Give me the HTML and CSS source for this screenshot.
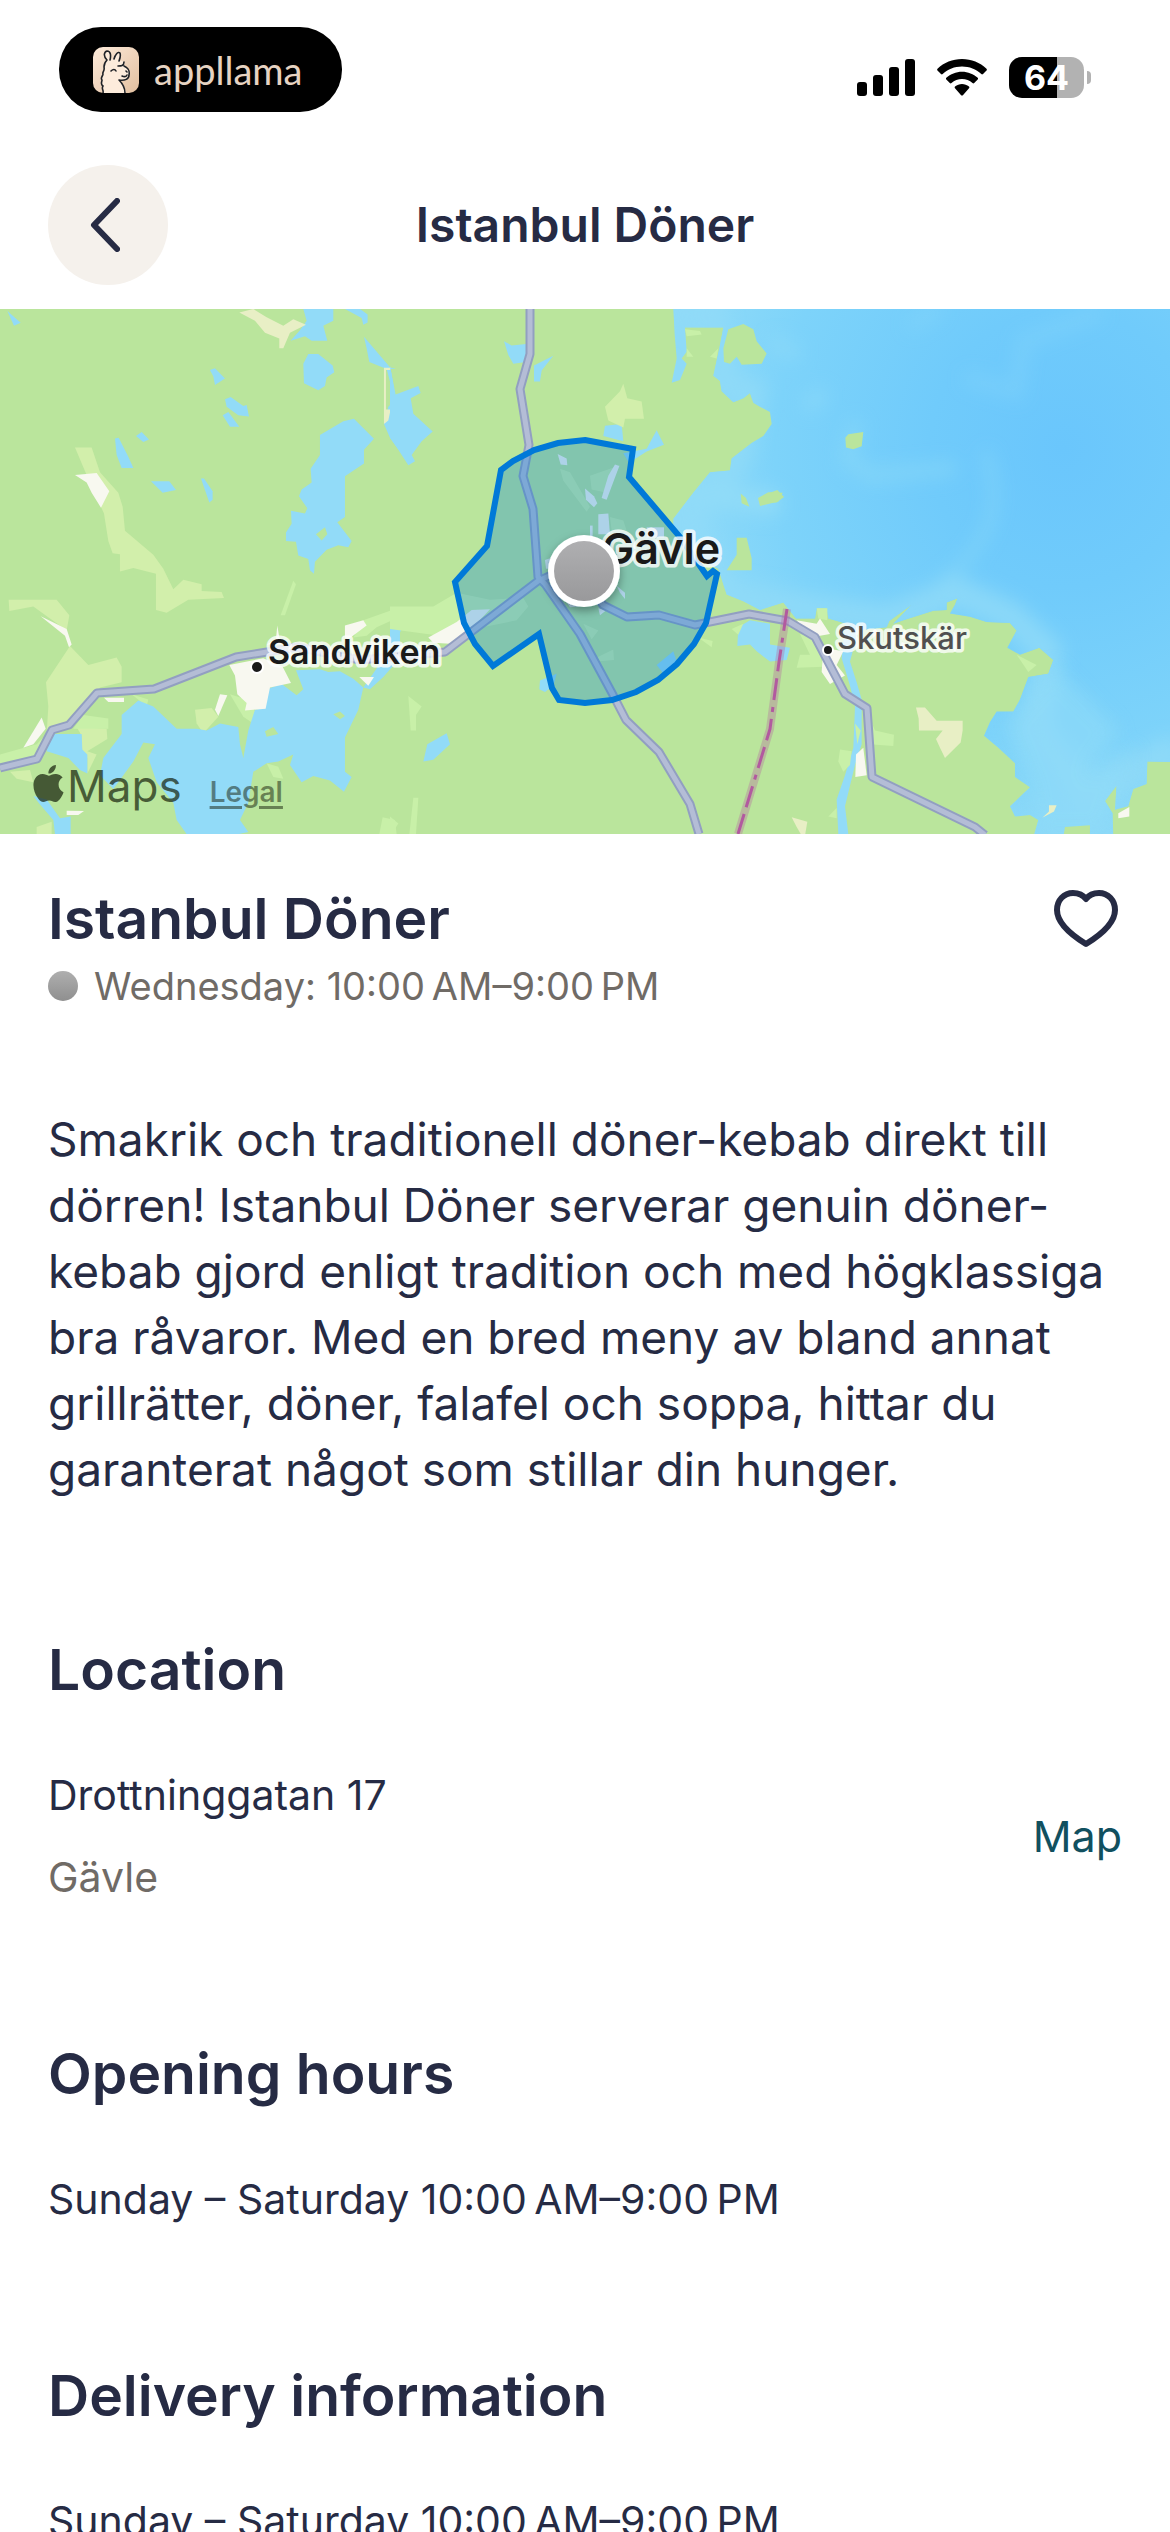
FILE: index.html
```html
<!DOCTYPE html>
<html lang="en">
<head>
    <meta charset="UTF-8">
    <meta name="viewport" content="width=device-width, initial-scale=1">
    <title>Istanbul Döner</title>
    <link rel="stylesheet" href="styles.css">
</head>
<body>
<!-- status bar -->
<div class="status-bar">
    <div class="app-pill">
        <svg class="app-icon" viewBox="0 0 46 46" aria-hidden="true">
            <defs>
                <linearGradient id="iconBg" x1="0" y1="0" x2="1" y2="1">
                    <stop offset="0" stop-color="#fdebdb"/>
                    <stop offset="1" stop-color="#e2bf9f"/>
                </linearGradient>
            </defs>
            <rect width="46" height="46" rx="10" fill="url(#iconBg)"/>
            <path d="M10 46C11 43 8 42 10 39C7 37 9 35 9 33C7 31 10 29 10 27C9 25 12 24 11 20C11 17 12 15 14 13C10 9 11 5 14 4C18 4 18 9 17 13L21 12C22 8 25 4 27 6C28 9 27 11 26 14C30 13 33 16 31 19C33 20 37 23 36 28C36 32 32 34 27 33C30 37 33 41 33 46Z" fill="#fdecdc"/>
            <path d="M10 46C11 43 8 42 10 39C7 37 9 35 9 33C7 31 10 29 10 27C9 25 12 24 11 20C11 17 12 15 14 13C10 9 11 5 14 4C18 4 18 9 17 13M21 12C22 8 25 4 27 6C28 9 27 11 26 14M25 19C28 19 31 19 31 15M31 19C35 21 37 23 36 28C36 32 32 34 26 33C30 37 32 41 32 46M18 24C20 22 22 22 23 24M33 24L34 25M29 29C31 30 33 30 34 28" fill="none" stroke="#1f2227" stroke-width="1.6" stroke-linecap="round" stroke-linejoin="round"/>
        </svg>
        <span class="app-name">appllama</span>
    </div>
    <div class="status-icons">
        <svg class="signal" viewBox="0 0 58 37" aria-hidden="true">
            <rect x="0" y="23" width="10" height="14" rx="3"/>
            <rect x="16" y="16" width="10" height="21" rx="3"/>
            <rect x="32" y="8" width="10" height="29" rx="3"/>
            <rect x="48" y="0" width="10" height="37" rx="3"/>
        </svg>
        <svg class="wifi" viewBox="0 0 50 37" aria-hidden="true">
            <path d="M25 0C34.500 0 43 3.500 49.500 9.700C50 10.200 50 11 49.500 11.500L46 15C45.500 15.500 44.800 15.500 44.300 15C39 10.200 32.500 7.500 25 7.500C17.500 7.500 11 10.200 5.700 15C5.200 15.500 4.500 15.500 4 15L.5 11.500C0 11 0 10.200.5 9.700C7 3.500 15.500 0 25 0Z"/>
            <path d="M25 12.700C31 12.700 36.500 15 40.700 18.800C41.200 19.300 41.200 20 40.700 20.500L37.200 24C36.700 24.500 36 24.500 35.500 24C32.600 21.500 29 20 25 20C21 20 17.400 21.500 14.500 24C14 24.500 13.300 24.500 12.800 24L9.300 20.500C8.800 20 8.800 19.300 9.300 18.800C13.500 15 19 12.700 25 12.700Z"/>
            <path d="M25 25C27.500 25 30 26 32 27.600C32.500 28.100 32.500 28.800 32 29.300L25.900 36.200C25.400 36.700 24.600 36.700 24.100 36.200L18 29.300C17.500 28.800 17.500 28.100 18 27.600C20 26 22.500 25 25 25Z"/>
        </svg>
        <div class="battery">
            <div class="battery-body">64</div>
            <div class="battery-cap"></div>
        </div>
    </div>
</div>

<!-- header -->
<header class="top-bar">
    <button type="button" class="back-btn" aria-label="Back">
        <svg viewBox="0 0 30 54" aria-hidden="true">
            <path d="M27 3L4 27L27 51" fill="none" stroke="#262b44" stroke-width="6" stroke-linecap="round" stroke-linejoin="round"/>
        </svg>
    </button>
    <div class="top-title">Istanbul Döner</div>
</header>

<!-- map -->
<div class="map" id="map">
    <svg class="map-canvas" viewBox="0 0 1170 525" role="img" aria-label="Map of Gävle">
        <defs>
            <radialGradient id="sea" gradientUnits="userSpaceOnUse" cx="880" cy="430" r="1150">
                <stop offset="0" stop-color="#6ac6fc"/>
                <stop offset=".35" stop-color="#70cbfb"/>
                <stop offset=".75" stop-color="#7dd3fa"/>
                <stop offset="1" stop-color="#8edaf8"/>
            </radialGradient>
            <linearGradient id="pin" x1="0" y1="0" x2="0" y2="1">
                <stop offset="0" stop-color="#afafb1"/>
                <stop offset="1" stop-color="#99999b"/>
            </linearGradient>
            <filter id="soft" x="-50%" y="-50%" width="200%" height="200%"><feGaussianBlur stdDeviation="26"/></filter>
            <filter id="shadow" x="-50%" y="-50%" width="200%" height="200%"><feDropShadow dx="0" dy="4" stdDeviation="5" flood-opacity=".35"/></filter>
            <path id="coast" d="M-290 20L-286 100L-280 170L-295 240L-270 232L-250 185L-265 170L-250 150L-255 80L-140 80L-152 140L-170 220L-150 235L-145 265L-110 297L-80 285L-60 270L-50 298L-30 310L0 325L5 360L-20 395L-55 415L-115 460L-120 495L-180 500L-230 560L-290 635L-290 660L-250 740L-155 780L-140 825L-130 855L-80 875L-30 900L40 878L78 925L135 925L140 895L170 895L175 925L230 940L260 960L350 950L358 932L425 885L370 940L400 930L490 902L530 900L530 878L563 866L555 885L540 910L600 920L650 935L720 938L740 960L712 1010L750 1030L808 1010L850 1045L835 1085L775 1095L750 1160L730 1195L680 1195L660 1225L642 1265L685 1300L735 1345L735 1385L780 1415L720 1470L735 1500L780 1495L805 1510L790 1560L1030 1560L1028 1490L1005 1455L1040 1410L1035 1480L1075 1470L1090 1420L1130 1405L1132 1340L1210 1342V20Z"/>
            <clipPath id="seaClip"><use href="#coast"/></clipPath>
            <path id="roadNorth" d="M530 0V45L520 80L529 136L523 167L533 200L538 268L545 275L580 325L612 384L626 411L659 443L690 495L699 525"/>
            <path id="roadWest" d="M0 459L37 450L52 421L69 416L97 384L154 380L236 348L267 343L297 338L360 351L445 343L538 272L560 262"/>
            <path id="roadEast" d="M584 270L603 296L627 308L659 306L695 316L749 305L788 312L815 328L845 385L867 399L872 468L975 518L985 526"/>
            <path id="railway" d="M787 300L779 353L770 420L756 466L738 525"/>
        </defs>
        <rect width="1170" height="525" fill="#bae59c"/>

        <!-- sea -->
        <g transform="translate(770 -9) scale(.3333 .3444)">
            <use href="#coast" fill="url(#sea)"/>
            <g clip-path="url(#seaClip)">
                <g filter="url(#soft)" fill="none" stroke="#90dbf8" stroke-linecap="round">
                    <path d="M-290 30L-180 40L-140 240L-60 270L-100 460L-250 640L-130 860L60 890L350 930L560 850L720 920L830 1020L800 1250L950 1450L1190 1320" stroke-width="90" opacity=".8"/>
                    <path d="M-250 560L0 590" stroke-width="70"/>
                    <path d="M650 450Q700 600 630 700T510 820" stroke-width="26" opacity=".5"/>
                    <path d="M255 370L230 460L300 510L540 490" stroke-width="40" opacity=".5"/>
                    <path d="M430 70L500 30M600 230L740 270L760 120L980 40" stroke-width="40" opacity=".3"/>
                    <path d="M70 150L20 130M120 300L150 280" stroke-width="45" opacity=".6"/>
                </g>
                <path d="M950 1380L1100 1300L1000 1550H800L780 1420L700 1230L850 1060L1050 1250Z" fill="#90dbf8" opacity=".6" filter="url(#soft)"/>
            </g>
            <g fill="#bae59c">
                <path d="M226 400L235 390L280 383L275 425L250 433L228 428Z"/>
                <path d="M0 560L22 552L42 572L20 588H0Z"/>
                <path d="M-36 575L-5 558L38 560L25 585L-30 598Z"/>
                <path d="M-88 562L-72 575L-62 600L-85 590Z"/>
                <path d="M-100 690L-70 690L-55 750L-55 785L-130 785L-100 740Z"/>
                <path d="M-140 140L-125 85L-80 70L-50 85L-40 120L-10 155L-25 185L-85 188L-100 165L-120 185L-138 180Z"/>
                <path d="M885 1530L960 1525V1560H880Z"/>
            </g>
            <!-- river and bay near Skutskär -->
            <g fill="#92dbf8">
                <path d="M-95 950L-60 930L0 940V1000L60 1010L50 1045L0 1050L-40 1020L-60 1000L-98 1005Z"/>
                <path d="M225 940L265 960L240 1050L260 1110L275 1160L275 1290L255 1350L225 1470L235 1551H205L200 1450L225 1380L250 1300L255 1180L240 1120L215 1040Z"/>
            </g>
            <g fill="#c8f0a8">
                <path d="M140 895L172 895L172 930L145 925Z"/>
                <path d="M90 970L120 975L150 1030L160 1065L80 1068L90 1030L120 1030Z"/>
                <path d="M740 1030L800 1060L775 1080Z"/>
                <path d="M300 1215L315 1250L372 1262L370 1295L300 1290Z"/>
                <path d="M210 1305L245 1310L240 1350L220 1370L205 1340Z"/>
                <path d="M255 1230L272 1250L262 1290Z"/>
                <path d="M175 1500L200 1475V1505Z"/>
                <path d="M-255 85L-210 90L-205 100L-250 105ZM-250 140L-230 165H-250ZM-155 140L-180 165L-160 170Z"/>
            </g>
            <g fill="#f8f8f0">
                <path d="M80 930L140 940L150 925L180 970L120 980Z"/>
                <path d="M160 1010L220 1020L200 1060L225 1090L180 1115L155 1080Z"/>
                <path d="M258 1320L280 1300L290 1380L256 1385Z"/>
                <path d="M1045 1490L1078 1472V1500L1045 1505Z"/>
            </g>
            <g fill="#e8efc5">
                <path d="M438 1183H465L500 1222H578V1250L572 1285L525 1330L510 1300L498 1275L518 1250H447L446 1215Z"/>
                <path d="M65 1502L112 1515L105 1555H95L80 1530Z"/>
                <path d="M817 1503L837 1485V1467H860L852 1485Z"/>
            </g>
        </g>

        <!-- west part -->
        <g transform="translate(0 -9) scale(.3333 .3444)">
            <g fill="#d2efab">
                <path d="M225 428H275L300 500L355 560L368 600L375 670L460 740L490 780L520 840L550 812L605 825L605 845L665 848L672 865L565 870L500 908L468 900V795L400 778L360 788V738L338 735L325 700L312 620L265 520Z"/>
                <path d="M26 870L170 870L208 915L200 960L150 925L100 890L28 903Z"/>
                <path d="M210 1005L265 1060L350 1038L365 1065L365 1110L300 1125L285 1150L210 1230L140 1260L145 1180L138 1110Z"/>
                <path d="M585 1190L635 1185L655 1210L610 1258L590 1230Z"/>
                <path d="M230 1240L320 1245L322 1275L262 1310L290 1320L262 1375V1330L245 1310V1265Z"/>
                <path d="M110 1530L155 1515V1560H110Z"/>
                <path d="M30 1370L90 1365L100 1400L50 1390Z"/>
                <path d="M795 1260L820 1240L835 1265L800 1270Z"/>
            </g>
            <g fill="#c8f0a8">
                <path d="M1060 980L1090 930L1200 892V920L1130 950L1100 975Z"/>
                <path d="M880 815L888 825L855 915L842 915Z"/>
                <path d="M690 1145L740 1160L770 1200L760 1230L730 1210Z"/>
                <path d="M0 1320L110 1290L140 1260L110 1330L0 1350Z"/>
                <path d="M250 1205L325 1215V1245H220Z"/>
                <path d="M800 1345L835 1355L850 1390L820 1385Z"/>
                <path d="M1138 1551L1148 1502L1185 1510L1190 1551Z"/>
                <path d="M395 1145L445 1160L440 1180Z"/>
            </g>
            <g fill="#92dbf8">
                <path d="M22 32L62 66L42 75Z"/>
                <path d="M910 26H1000V60L970 75L982 118H935L915 105L872 118L900 88L920 60Z"/>
                <path d="M1035 26H1080L1103 42V65L1090 72L1085 52Z"/>
                <path d="M1092 107L1170 195L1187 200H1172L1188 280L1200 278V440L1170 400L1152 360L1165 310L1185 290L1160 200L1108 180L1100 140Z"/>
                <path d="M925 157H955L998 190L1003 210L980 225L975 250L955 262L912 242L910 185Z"/>
                <path d="M630 203L645 198L675 228L645 247L640 222Z"/>
                <path d="M675 288L692 282L730 308L740 305L747 338L715 335L680 310Z"/>
                <path d="M668 335L685 325L718 368H690Z"/>
                <path d="M345 402L356 400L385 455L400 488H365L350 450Z"/>
                <path d="M408 395L425 383L447 405L430 412Z"/>
                <path d="M453 526H508L528 552L488 560Z"/>
                <path d="M603 518H612L638 555V580L628 588Z"/>
                <path d="M960 392L1030 352L1062 345L1122 403L1092 435V475L1035 512V630L1012 645L1055 700L1045 718L1015 712L980 725L945 760L942 795L930 785L925 752L895 742L888 702L858 700V675L875 650L873 612L915 620L922 605L897 570L905 550L935 530L932 490L960 450Z"/>
                <path d="M365 1205L415 1163L460 1180L530 1245H590L620 1250L660 1230L715 1240L720 1290L730 1330L745 1250L765 1190L795 1185L800 1130L845 1115L890 1148L910 1130L888 1075L960 1072L985 1080L1020 1078L1060 1100L1090 1125L1075 1190L1035 1270V1370L1055 1385L1032 1428L990 1395L940 1382L905 1400L870 1350L880 1320L835 1340L800 1345L760 1370L745 1460L720 1510L745 1545L715 1551H560L530 1510L520 1460L470 1400L445 1330L465 1290L430 1285L400 1340L340 1420L330 1410L300 1380L310 1330L365 1260Z"/>
                <path d="M150 1260H245L247 1305L262 1320V1375L240 1365L205 1330L140 1310Z"/>
                <path d="M100 1440L140 1450L180 1505L212 1500V1551H165L160 1510L120 1465Z"/>
                <path d="M1090 1125L1130 1070L1180 960L1200 952V1040L1150 1095L1110 1130Z"/>
            </g>
            <g fill="#bae59c">
                <path d="M948 680L975 660L982 680L965 698Z"/>
                <path d="M795 1252L820 1240L835 1260L800 1268Z"/>
                <path d="M1000 1203L1020 1195L1035 1208L1020 1217Z"/>
            </g>
            <g fill="#f8f8f0">
                <path d="M225 508L290 502L328 555L303 603L275 560L260 530Z"/>
                <path d="M122 918L200 955L215 1000L207 1008L195 975Z"/>
                <path d="M312 1155H372V1167H325Z"/>
                <path d="M125 1212L137 1245L100 1290L70 1300Z"/>
                <path d="M688 1060L790 1040L848 1065L873 1112L810 1125L797 1187L735 1192L740 1170L712 1145L705 1090Z"/>
                <path d="M660 1145L682 1148L655 1208L645 1190Z"/>
                <path d="M828 985L832 945L838 980L850 1000H800Z"/>
                <path d="M1035 945L1090 930L1100 945L1045 985L1035 980Z"/>
                <path d="M1078 1095H1122L1105 1120Z"/>
                <path d="M200 1483L252 1484L235 1495H200Z"/>
            </g>
            <g fill="#e8efc5">
                <path d="M718 36L760 26L800 50L850 75L880 56L918 72L870 95L850 140H838V112L795 95L765 60Z"/>
                <path d="M1152 197H1172V203H1158V318H1172L1165 350L1152 360Z"/>
            </g>
        </g>

        <!-- middle part -->
        <g transform="translate(390 -9) scale(.3333 .3444)">
            <g fill="#92dbf8">
                <path d="M0 190L15 275L85 250L92 270L62 285L70 330L128 382L95 410L65 450L75 468L55 480L25 435L0 400Z"/>
                <path d="M342 120L365 132L408 128V180L370 185L355 160Z"/>
                <path d="M432 190L490 162L455 205L450 237H432Z"/>
                <path d="M645 365L695 360L700 410L640 395Z"/>
                <path d="M700 445L770 432L800 378L822 420L770 440L735 462L715 470Z"/>
                <path d="M450 1105L500 1085L490 1120L465 1138L448 1130Z"/>
                <path d="M100 1340L112 1290L170 1258L180 1290L130 1335Z"/>
                <path d="M800 1060L850 1020L860 1050L825 1090Z"/>
                <path d="M0 955L35 955L20 985H0Z"/>
            </g>
            <g fill="#d2efab">
                <path d="M645 310L690 265L700 243L712 285L755 295L762 345L705 345L700 370L655 350Z"/>
            </g>
            <g fill="#c8f0a8">
                <path d="M510 490L540 500L600 600L590 615L520 525Z"/>
                <path d="M600 510L660 490L690 480L650 560L605 550Z"/>
                <path d="M0 890L130 890L200 850L300 870L400 865L415 890L380 930L150 975L0 955Z"/>
                <path d="M55 1150L95 1180L78 1205V1250H62Z"/>
                <path d="M70 1445L85 1445L78 1551H58Z"/>
                <path d="M580 940L625 960L605 985Z"/>
                <path d="M605 1045L670 1015L672 1045L620 1050Z"/>
                <path d="M1025 955L1060 940L1045 972Z"/>
                <path d="M660 630L700 640L710 670L665 670Z"/>
                <path d="M925 980L968 990L965 1008Z"/>
                <path d="M0 1500L25 1520L5 1551H0Z"/>
            </g>
            <g fill="#f8f8f0">
                <path d="M503 447L530 460L532 480L512 478Z"/>
                <path d="M675 478L688 482L650 580L635 575L655 510Z"/>
                <path d="M585 547L612 570L622 590L612 602L588 580Z"/>
                <path d="M625 622L655 620L660 680H625Z"/>
                <path d="M600 655H608V690H600Z"/>
                <path d="M770 660H822V690H770Z"/>
                <path d="M115 980L200 935L245 900L300 898L230 970L180 998L130 995Z"/>
                <path d="M680 830L705 850V868L690 850Z"/>
                <path d="M465 755L480 750V780H468Z"/>
                <path d="M625 895L650 900L630 915Z"/>
                <path d="M525 870L570 890L540 892Z"/>
            </g>
        </g>

        <!-- roads -->
        <g fill="none" stroke-linejoin="round">
            <g stroke="#929fc1" stroke-width="9">
                <use href="#roadNorth"/>
                <use href="#roadWest"/>
                <use href="#roadEast"/>
            </g>
            <g stroke="#b4bdd6" stroke-width="5">
                <use href="#roadNorth"/>
                <use href="#roadWest"/>
                <use href="#roadEast"/>
            </g>
            <use href="#railway" stroke="#b46aa0" stroke-opacity=".35" stroke-width="8"/>
            <use href="#railway" stroke="#b25a9f" stroke-width="3" stroke-dasharray="22 7 5 7 22 7"/>
        </g>

        <!-- delivery zone -->
        <path d="M585 131L633 140L629 168L680 228L707 267L713 262L717 265L706 314L694 335L677 355L658 371L636 383L612 391L585 394L559 391L552 379L539 325L493 357L475 335L464 314L455 273L487 237L501 161L513 152L534 141L558 134Z" fill="#0079d8" fill-opacity=".3" stroke="#0079d8" stroke-width="6"/>

        <!-- places -->
        <circle cx="257" cy="358" r="6" class="place-dot"/>
        <circle cx="828" cy="341" r="5" class="place-dot"/>
        <text x="268" y="355" class="place place-town">Sandviken</text>
        <text x="602" y="255" class="place place-city">Gävle</text>
        <text x="837" y="340" class="place place-small">Skutskär</text>

        <circle cx="584" cy="262" r="36" fill="#fff" filter="url(#shadow)"/>
        <circle cx="584" cy="262" r="30" fill="url(#pin)"/>
    </svg>
    <div class="map-credit">
        <svg class="apple" viewBox="0 0 24 24" aria-hidden="true">
            <path d="M12.152 6.896c-.948 0-2.415-1.078-3.96-1.04-2.040.027-3.910 1.183-4.961 3.014-2.117 3.675-.546 9.103 1.519 12.090 1.013 1.454 2.208 3.090 3.792 3.039 1.520-.065 2.090-.987 3.935-.987 1.831 0 2.350.987 3.960.948 1.637-.026 2.676-1.480 3.676-2.948 1.156-1.688 1.636-3.325 1.662-3.415-.039-.013-3.182-1.221-3.220-4.857-.026-3.040 2.480-4.494 2.597-4.559-1.429-2.090-3.623-2.324-4.390-2.376-2-.156-3.675 1.090-4.610 1.090zM15.530 3.830c.843-1.012 1.400-2.427 1.245-3.830-1.207.052-2.662.805-3.532 1.818-.780.896-1.454 2.338-1.273 3.714 1.338.104 2.715-.688 3.559-1.701"/>
        </svg>
        <span class="map-brand">Maps</span>
        <a href="#legal" class="map-legal">Legal</a>
    </div>
</div>

<!-- restaurant info -->
<main class="content">
    <div class="name-row">
        <h1>Istanbul Döner</h1>
        <button type="button" class="fav-btn" aria-label="Add to favourites">
            <svg viewBox="0 0 64 58" aria-hidden="true">
                <path d="M32 54C19 46 3 34 3 20C3 10 10 3 19 3C25 3 29 5 32 9C35 5 39 3 45 3C54 3 61 10 61 20C61 34 45 46 32 54Z" fill="none" stroke="#262b44" stroke-width="6" stroke-linejoin="round"/>
            </svg>
        </button>
    </div>
    <div class="today">
        <span class="today-dot"></span>
        Wednesday: 10:00&#8239;AM–9:00&#8239;PM
    </div>
    <p class="about">Smakrik och traditionell döner-kebab direkt till dörren! Istanbul Döner serverar genuin döner-kebab gjord enligt tradition och med högklassiga bra råvaror. Med en bred meny av bland annat grillrätter, döner, falafel och soppa, hittar du garanterat något som stillar din hunger.</p>

    <section class="info">
        <h2>Location</h2>
        <div class="address-row">
            <div class="address">
                <p>Drottninggatan 17</p>
                <p class="city">Gävle</p>
            </div>
            <a href="#map" class="map-link">Map</a>
        </div>
    </section>

    <section class="info">
        <h2>Opening hours</h2>
        <p>Sunday – Saturday 10:00&#8239;AM–9:00&#8239;PM</p>
    </section>

    <section class="info">
        <h2>Delivery information</h2>
        <p>Sunday – Saturday 10:00&#8239;AM–9:00&#8239;PM</p>
    </section>
</main>
</body>
</html>
```
FILE: styles.css
```css
* {
    box-sizing: border-box;
}

body {
    margin: 0;
    background-color: #fff;
    color: #262b44;
    font-family: Inter, "Liberation Sans", sans-serif;
    font-size: 41px;
    line-height: 48px;
}

h1, h2, p {
    margin: 0;
}

button {
    border: 0;
    padding: 0;
    background: none;
    cursor: pointer;
}

/* status bar */
.status-bar {
    display: flex;
    justify-content: space-between;
    align-items: center;
    padding: 27px 79px 0 59px;
}

.app-pill {
    display: flex;
    align-items: center;
    gap: 15px;
    width: 283px;
    height: 85px;
    padding: 0 34px;
    border-radius: 42px;
    background-color: #000;
}

.app-icon {
    width: 46px;
    height: 46px;
}

.app-name {
    font-family: Lato, sans-serif;
    font-size: 38px;
    color: #e6d3c2;
}

.status-icons {
    display: flex;
    align-items: center;
    gap: 22px;
    padding-top: 16px;
}

.signal {
    width: 58px;
    height: 37px;
}

.wifi {
    width: 50px;
    height: 37px;
}

.battery {
    display: flex;
    align-items: center;
    gap: 3px;
}

.battery-body {
    width: 75px;
    height: 41px;
    border-radius: 13px;
    background: linear-gradient(to right, #000 64%, #b2b2b2 64%);
    color: #fff;
    font-size: 34px;
    font-weight: 700;
    line-height: 41px;
    text-align: center;
}

.battery-cap {
    width: 4px;
    height: 13px;
    border-radius: 0 4px 4px 0;
    background-color: #b2b2b2;
}

/* header */
.top-bar {
    display: grid;
    grid-template-columns: 120px 1fr 120px;
    align-items: center;
    padding: 53px 48px 24px;
}

.back-btn {
    display: flex;
    align-items: center;
    justify-content: center;
    width: 120px;
    height: 120px;
    padding-right: 6px;
    border-radius: 50%;
    background-color: #f5f1ec;
}

.back-btn svg {
    width: 30px;
    height: 54px;
}

.top-title {
    font-size: 48px;
    font-weight: 600;
    text-align: center;
}

/* map */
.map {
    position: relative;
}

.map-canvas {
    display: block;
    width: 100%;
    height: auto;
}

.place {
    fill: #1a1a1a;
    stroke: rgba(255, 255, 255, .8);
    stroke-width: 7px;
    stroke-linejoin: round;
    paint-order: stroke;
    font-weight: 600;
}

.place-city {
    font-size: 43px;
}

.place-town {
    font-size: 34px;
}

.place-small {
    font-size: 31px;
    font-weight: 500;
    fill: #505050;
}

.place-dot {
    fill: #1a1a1a;
    stroke: #fff;
    stroke-width: 2px;
}

.map-credit {
    position: absolute;
    left: 30px;
    bottom: 18px;
    display: flex;
    align-items: baseline;
    color: rgba(20, 30, 10, .7);
}

.apple {
    width: 37px;
    height: 37px;
    fill: currentColor;
}

.map-brand {
    font-size: 44px;
}

.map-legal {
    margin-left: 28px;
    font-size: 28px;
    font-weight: 600;
    color: rgba(20, 30, 10, .5);
    text-decoration-thickness: 3px;
    text-underline-offset: 4px;
}

/* restaurant info */
.content {
    padding: 51px 48px 0;
}

h1, h2 {
    font-size: 57px;
    font-weight: 600;
    line-height: 68px;
}

.name-row {
    display: flex;
    justify-content: space-between;
    align-items: center;
}

.fav-btn {
    width: 72px;
    height: 68px;
}

.fav-btn svg {
    display: block;
    width: 64px;
    height: 58px;
    margin: 0 auto;
}

.today {
    display: flex;
    align-items: center;
    gap: 16px;
    margin-top: 9px;
    font-size: 38px;
    color: #706b66;
}

.today-dot {
    width: 30px;
    height: 30px;
    border-radius: 50%;
    background: linear-gradient(#afafaf, #8f8f8f);
}

.about {
    margin-top: 96px;
    font-size: 46px;
    line-height: 66px;
}

.info {
    margin-top: 139px;
}

.about + .info {
    margin-top: 134px;
}

.info h2 {
    margin-bottom: 67px;
}

.address-row {
    display: flex;
    justify-content: space-between;
    align-items: center;
}

.address {
    display: flex;
    flex-direction: column;
    gap: 34px;
}

.city {
    color: #706b66;
}

.map-link {
    font-size: 43px;
    color: #11505f;
    text-decoration: none;
}
```
